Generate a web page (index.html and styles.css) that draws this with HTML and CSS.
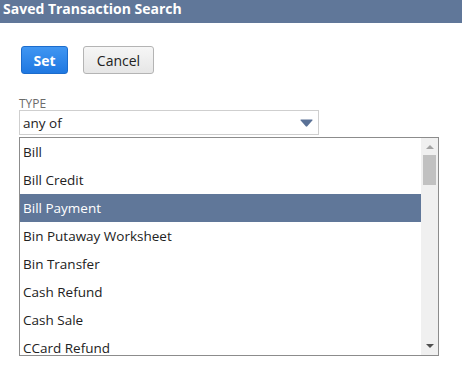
FILE: index.html
```html
<!DOCTYPE html>
<html>
<head>
    <title>Saved Transaction Search</title>
    <link rel="stylesheet" href="styles.css">
</head>
<body>
    <div class="header">Saved Transaction Search</div>
    <div class="content">
        <div class="buttons">
            <button class="btn btn-set">Set</button>
            <button class="btn btn-cancel">Cancel</button>
        </div>
        <div class="field-label">Type</div>
        <div class="select">
            <span class="select-value">any of</span>
            <svg class="select-arrow" width="13" height="8" viewBox="0 0 13 8">
                <path d="M1 0.5 H12 Q13 0.5 12.3 1.4 L7.3 7.3 Q6.5 8 5.7 7.3 L0.7 1.4 Q0 0.5 1 0.5 Z" fill="#5a7196"/>
            </svg>
        </div>
        <div class="listbox">
            <ul class="options">
                <li>Bill</li>
                <li>Bill Credit</li>
                <li class="selected">Bill Payment</li>
                <li>Bin Putaway Worksheet</li>
                <li>Bin Transfer</li>
                <li>Cash Refund</li>
                <li>Cash Sale</li>
                <li>CCard Refund</li>
            </ul>
            <div class="scrollbar">
                <div class="arrow-up"></div>
                <div class="thumb"></div>
                <div class="track"></div>
                <div class="arrow-down"></div>
            </div>
        </div>
    </div>
</body>
</html>
```

FILE: styles.css
```css
body {
    margin: 0;
    padding: 0;
    background-color: #fff;
    font-family: "Open Sans", Arial, sans-serif;
    color: #222;
}
.header {
    height: 23px;
    box-sizing: border-box;
    padding: 1px 3px 0;
    background-color: #607799;
    color: white;
    font-weight: bold;
    font-size: 14px;
    line-height: 15px;
}
.content {
    padding: 23px 0 0 19px;
}
.buttons {
    display: flex;
    gap: 15px;
    padding-left: 2px;
}
.btn {
    height: 28px;
    box-sizing: border-box;
    border-radius: 3px;
    font-family: "Open Sans", Arial, sans-serif;
    font-size: 14px;
    padding: 0;
    cursor: pointer;
}
.btn-set {
    width: 47px;
    border: 1px solid #1c6ccc;
    background: linear-gradient(#4096f2, #1f78e1);
    color: white;
    font-weight: bold;
}
.btn-cancel {
    width: 71px;
    border: 1px solid #b4b4b4;
    background: linear-gradient(#f6f6f6, #e6e6e6);
    color: #222;
}
.field-label {
    margin-top: 23px;
    font-size: 12px;
    line-height: 13px;
    text-transform: uppercase;
    color: #6b6b6b;
}
.select {
    width: 300px;
    height: 25px;
    box-sizing: border-box;
    border: 1px solid #cfcfcf;
    display: flex;
    align-items: center;
    justify-content: space-between;
    padding: 0 5px 0 3px;
}
.select-value {
    font-size: 13.5px;
    color: #222;
}
.listbox {
    margin-top: 2px;
    width: 420px;
    height: 219px;
    box-sizing: border-box;
    border: 1px solid #8c8c8c;
    display: flex;
}
.options {
    list-style: none;
    margin: 0;
    padding: 0;
    flex-grow: 1;
    overflow: hidden;
}
.options li {
    height: 28px;
    line-height: 28px;
    padding-left: 3px;
    font-size: 13.5px;
    color: #222;
}
.options li.selected {
    background-color: #607799;
    color: white;
}
.scrollbar {
    width: 17px;
    background-color: #f0f0f0;
    display: flex;
    flex-direction: column;
    align-items: center;
}
.arrow-up {
    margin-top: 7px;
    width: 0;
    height: 0;
    border-left: 4px solid transparent;
    border-right: 4px solid transparent;
    border-bottom: 4px solid #a3a3a3;
}
.thumb {
    margin-top: 6px;
    width: 13px;
    height: 30px;
    background-color: #c1c1c1;
}
.track {
    flex-grow: 1;
}
.arrow-down {
    margin-bottom: 7px;
    width: 0;
    height: 0;
    border-left: 4px solid transparent;
    border-right: 4px solid transparent;
    border-top: 4px solid #505050;
}
```
